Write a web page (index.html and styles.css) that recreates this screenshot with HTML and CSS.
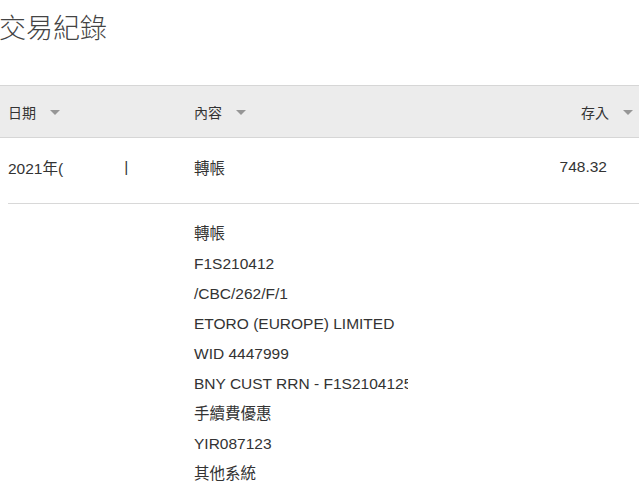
FILE: index.html
```html
<!DOCTYPE html>
<html lang="zh-Hant">
<head>
  <meta charset="UTF-8" />
  <meta name="viewport" content="width=device-width, initial-scale=1.0" />
  <title>交易紀錄</title>
  <link rel="stylesheet" href="styles.css">
</head>
<body>
  <h1 class="title">交易紀錄</h1>

  <div class="table">
    <div class="head">
      <div class="col-date">日期 <span class="caret"></span></div>
      <div class="col-desc">內容 <span class="caret"></span></div>
      <div class="col-amt">存入 <span class="caret"></span></div>
    </div>

    <div class="row">
      <div class="col-date">2021年(<span class="mask"></span>|</div>
      <div class="col-desc">轉帳</div>
      <div class="col-amt"><span class="amt">748.32</span></div>
    </div>

    <div class="details">
      <div>轉帳</div>
      <div>F1S210412</div>
      <div>/CBC/262/F/1</div>
      <div>ETORO (EUROPE) LIMITED</div>
      <div>WID 4447999</div>
      <div>BNY CUST RRN - F1S210412<span class="cut">5</span></div>
      <div>手續費優惠</div>
      <div>YIR087123</div>
      <div>其他系統</div>
    </div>
  </div>
</body>
</html>
```

FILE: styles.css
```css
body {
  margin: 0;
  font-family: "Liberation Sans", "Noto Sans CJK TC", sans-serif;
  color: #333;
  background: white;
  overflow: hidden;
}
.title {
  margin: 0 0 0 -1px;
  padding-top: 11px;
  height: 85px;
  box-sizing: border-box;
  font-size: 27px;
  line-height: 36px;
  font-weight: 300;
  color: #444;
}
.head {
  display: flex;
  align-items: center;
  height: 53px;
  box-sizing: border-box;
  background: #ececec;
  border-top: 1px solid #d6d6d6;
  border-bottom: 1px solid #d6d6d6;
  font-size: 14px;
  color: #333;
}
.col-date {
  width: 186px;
  padding-left: 8px;
  display: flex;
  align-items: center;
}
.col-desc {
  width: 260px;
  display: flex;
  align-items: center;
}
.col-amt {
  flex: 1;
  display: flex;
  align-items: center;
  justify-content: flex-end;
  padding-right: 6px;
}
.caret {
  display: inline-block;
  width: 0;
  height: 0;
  margin-left: 14px;
  margin-top: 2px;
  border-left: 5.5px solid transparent;
  border-right: 5.5px solid transparent;
  border-top: 5px solid #969696;
}
.row {
  display: flex;
  align-items: center;
  height: 66px;
  box-sizing: border-box;
  padding-bottom: 7px;
  margin-left: 8px;
  font-size: 15.5px;
  border-bottom: 1px solid #d8d8d8;
}
.row .col-date {
  padding-left: 0;
}
.mask {
  display: inline-block;
  width: 61px;
}
.amt {
  margin-right: 26px;
}
.details {
  padding: 15px 0 0 194px;
  font-size: 15.5px;
  line-height: 30px;
}
.cut {
  display: inline-block;
  width: 4px;
  overflow: hidden;
  vertical-align: bottom;
}
```
